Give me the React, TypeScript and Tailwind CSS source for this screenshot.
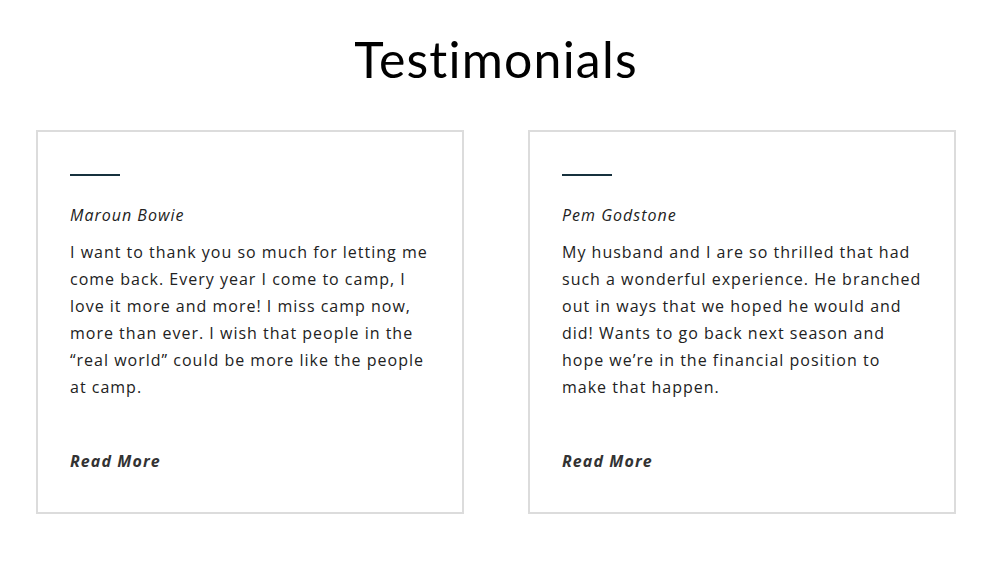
import React from "react";

const cards = [
  {
    name: "Maroun Bowie",
    text: "I want to thank you so much for letting me come back. Every year I come to camp, I love it more and more! I miss camp now, more than ever. I wish that people in the \u201creal world\u201d could be more like the people at camp.",
  },
  {
    name: "Pem Godstone",
    text: "My husband and I are so thrilled that had such a wonderful experience. He branched out in ways that we hoped he would and did! Wants to go back next season and hope we\u2019re in the financial position to make that happen.",
  },
];

export default function App() {
  return (
    <div className="w-[992px] h-[578px] bg-white overflow-hidden">
      <h1
        className="text-center text-[50px] leading-[60px] pt-[29px] text-black tracking-[1.2px] font-normal"
        style={{ fontFamily: "Lato, 'Noto Sans', sans-serif" }}
      >
        Testimonials
      </h1>
      <div className="flex gap-[64px] pl-[36px] mt-[41px]">
        {cards.map((c) => (
          <div
            key={c.name}
            className="w-[428px] h-[384px] border-2 border-[#dcdcdc] pl-[32px] pr-[28px] pt-[42px] flex flex-col"
            style={{ fontFamily: "'Open Sans', sans-serif" }}
          >
            <div className="w-[50px] h-[2px] bg-[#17313d]" />
            <div className="mt-[28px] italic text-[16px] leading-[22px] tracking-[1px] text-[#222]">
              {c.name}
            </div>
            <p className="mt-[13px] text-[16px] leading-[27px] tracking-[1px] text-[#222]">
              {c.text}
            </p>
            <div className="mt-auto mb-[40px] italic font-bold text-[16px] leading-[22px] tracking-[1.1px] text-[#333]">
              Read More
            </div>
          </div>
        ))}
      </div>
    </div>
  );
}
